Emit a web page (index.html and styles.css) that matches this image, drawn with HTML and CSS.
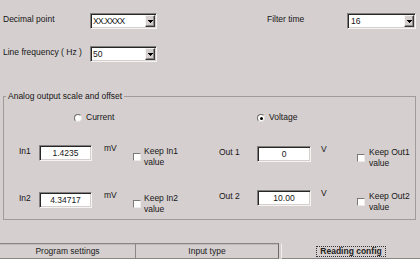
FILE: index.html
```html
<!DOCTYPE html>
<html>
<head>
<meta charset="utf-8">
<link rel="stylesheet" href="styles.css">
</head>
<body>
<div class="dialog">
  <div class="top">
    <div class="row">
      <span class="lbl lbl-main">Decimal point</span>
      <div class="combo combo-main">
        <span class="val squeeze">XX.XXXX</span>
        <span class="drop"><svg width="5" height="3" viewBox="0 0 5 3" shape-rendering="crispEdges"><polygon points="0,0 5,0 5,1 4,1 4,2 3,2 3,3 2,3 2,2 1,2 1,1 0,1" fill="#000"/></svg></span>
      </div>
      <span class="lbl lbl-filter">Filter time</span>
      <div class="combo combo-filter">
        <span class="val">16</span>
        <span class="drop"><svg width="5" height="3" viewBox="0 0 5 3" shape-rendering="crispEdges"><polygon points="0,0 5,0 5,1 4,1 4,2 3,2 3,3 2,3 2,2 1,2 1,1 0,1" fill="#000"/></svg></span>
      </div>
    </div>
    <div class="row row-second">
      <span class="lbl lbl-main">Line frequency ( Hz )</span>
      <div class="combo combo-main">
        <span class="val">50</span>
        <span class="drop"><svg width="5" height="3" viewBox="0 0 5 3" shape-rendering="crispEdges"><polygon points="0,0 5,0 5,1 4,1 4,2 3,2 3,3 2,3 2,2 1,2 1,1 0,1" fill="#000"/></svg></span>
      </div>
    </div>
  </div>

  <fieldset class="group">
    <legend>Analog output scale and offset</legend>
    <div class="cols">
      <div class="col col-in">
        <div class="radio-row"><span class="radio"></span><span>Current</span></div>
        <div class="field">
          <span class="flabel">In1</span>
          <div class="input">1.4235</div>
          <span class="unit">mV</span>
          <span class="check"></span>
          <span class="keep">Keep In1<br>value</span>
        </div>
        <div class="field">
          <span class="flabel">In2</span>
          <div class="input">4.34717</div>
          <span class="unit">mV</span>
          <span class="check"></span>
          <span class="keep">Keep In2<br>value</span>
        </div>
      </div>
      <div class="col col-out">
        <div class="radio-row"><span class="radio on"></span><span>Voltage</span></div>
        <div class="field">
          <span class="flabel">Out 1</span>
          <div class="input">0</div>
          <span class="unit">V</span>
          <span class="check"></span>
          <span class="keep">Keep Out1<br>value</span>
        </div>
        <div class="field">
          <span class="flabel">Out 2</span>
          <div class="input">10.00</div>
          <span class="unit">V</span>
          <span class="check"></span>
          <span class="keep">Keep Out2<br>value</span>
        </div>
      </div>
    </div>
  </fieldset>

  <div class="tabs">
    <div class="tab tab-1">Program settings</div>
    <div class="tab tab-2">Input type</div>
    <div class="tab tab-3 active"><span class="focus">Reading config</span></div>
  </div>
</div>
</body>
</html>
```
FILE: styles.css
```css
html, body {
  margin: 0;
  padding: 0;
}
body {
  width: 420px;
  height: 259px;
  overflow: hidden;
  background: #d5cfcf;
  font-family: "Liberation Sans", Arial, sans-serif;
  font-size: 8.5px;
  line-height: 11px;
  color: #161616;
}
.dialog {
  width: 420px;
  height: 259px;
}

/* top rows */
.top {
  padding-top: 13px;
}
.row {
  display: flex;
  align-items: flex-start;
  height: 16px;
  padding-left: 3px;
}
.row-second {
  margin-top: 17px;
}
.lbl {
  margin-top: 1px;
  white-space: nowrap;
}
.lbl-main {
  width: 87px;
}
.lbl-filter {
  width: 80px;
  margin-left: 110px;
}

/* combo box */
.combo {
  box-sizing: border-box;
  height: 16px;
  display: flex;
  align-items: center;
  background: #fff;
  border: 1px solid;
  border-color: #858080 #f6f3f3 #f6f3f3 #858080;
  box-shadow: inset 1px 1px 0 #262626, inset -1px -1px 0 #d5cfcf;
  padding: 1px 1px 1px 2px;
}
.combo-main {
  width: 67px;
}
.combo-filter {
  width: 69px;
  padding-left: 3px;
}
.val {
  flex: 1;
  line-height: 12px;
}
.squeeze {
  letter-spacing: -0.7px;
}
.drop {
  box-sizing: border-box;
  width: 10px;
  height: 12px;
  display: flex;
  align-items: center;
  justify-content: center;
  background: #d5cfcf;
  border: 1px solid;
  border-color: #f6f3f3 #3a3a3a #3a3a3a #f6f3f3;
  box-shadow: inset -1px -1px 0 #8c8787;
}
.drop svg {
  display: block;
}

/* group box */
.group {
  box-sizing: border-box;
  width: 413px;
  height: 129px;
  margin: 29px 0 0 3px;
  padding: 10px 0 0 0;
  border: 1px solid #a19c9c;
  min-inline-size: 0;
}
.group legend {
  padding: 0 2px;
  margin-left: 2px;
  line-height: 11px;
}
.cols {
  display: flex;
  padding-left: 15px;
}
.col {
  display: flex;
  flex-direction: column;
}
.col-in {
  width: 200px;
}
.col-out {
  flex: 1;
}
.radio-row {
  display: flex;
  align-items: flex-start;
  gap: 4px;
  height: 11px;
}
.col-in .radio-row {
  margin-left: 55px;
}
.col-out .radio-row {
  margin-left: 38px;
}
.radio {
  box-sizing: border-box;
  width: 8px;
  height: 8px;
  margin-top: 2px;
  border-radius: 50%;
  background: #fff;
  border: 1px solid;
  border-color: #6f6b6b #e4e0e0 #e4e0e0 #6f6b6b;
  display: flex;
  align-items: center;
  justify-content: center;
}
.radio.on::after {
  content: "";
  width: 3px;
  height: 3px;
  border-radius: 50%;
  background: #000;
}

/* field rows */
.field {
  display: flex;
  align-items: flex-start;
  height: 16px;
  white-space: nowrap;
}
.col-in .field:nth-child(2) {
  margin-top: 22px;
}
.col-in .field:nth-child(3) {
  margin-top: 31px;
}
.col-out .field:nth-child(2) {
  margin-top: 23px;
}
.col-out .field:nth-child(3) {
  margin-top: 28px;
}
.flabel {
  margin-top: 1px;
}
.col-in .flabel {
  width: 20px;
}
.col-out .flabel {
  width: 38px;
}
.input {
  box-sizing: border-box;
  height: 16px;
  background: #fff;
  border: 1px solid;
  border-color: #858080 #f6f3f3 #f6f3f3 #858080;
  box-shadow: inset 1px 1px 0 #262626, inset -1px -1px 0 #d5cfcf;
  text-align: center;
  line-height: 14px;
}
.col-in .input {
  width: 53px;
}
.col-out .input {
  width: 54px;
}
.unit {
  margin-top: -2px;
}
.col-in .unit {
  margin-left: 12px;
  width: 29px;
}
.col-out .unit {
  margin-left: 10px;
  width: 36px;
}
.check {
  box-sizing: border-box;
  width: 8px;
  height: 8px;
  margin-top: 8px;
  background: #fff;
  border: 1px solid;
  border-color: #7c7878 #eeeaea #eeeaea #7c7878;
}
.keep {
  margin-top: 1px;
}
.col-in .keep {
  margin-left: 3px;
}
.col-out .keep {
  margin-left: 4px;
}

/* tabs */
.tabs {
  display: flex;
  height: 16px;
  margin-top: 23px;
}
.tab {
  box-sizing: border-box;
  height: 16px;
  display: flex;
  justify-content: center;
  align-items: flex-start;
  padding-top: 2px;
  border-top: 1px solid #8c8787;
  border-bottom: 1px solid #8c8787;
  box-shadow: inset 0 1px 0 #bfb9b9;
  white-space: nowrap;
  color: #1c1c1c;
}
.tab-1 {
  width: 136px;
  border-right: 1px solid #8c8787;
}
.tab-2 {
  width: 143px;
  border-right: 1px solid #6f6b6b;
}
.tab-3 {
  flex: 1;
  margin-left: 2px;
  border-top-color: transparent;
  border-left: 1px solid #f2eeee;
  box-shadow: none;
}
.focus {
  font-weight: bold;
  border: 1px dotted #333;
  padding: 0 3px;
  line-height: 9px;
}
```
